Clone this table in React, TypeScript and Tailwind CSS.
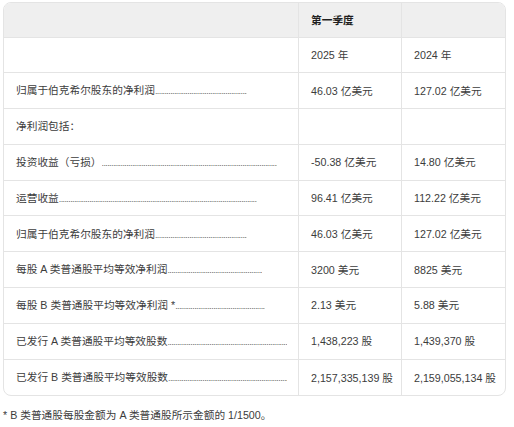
import React from 'react'

const rows: { label: string; end: number; a: string; b: string }[] = [
  { label: '', end: 0, a: '2025 年', b: '2024 年' },
  { label: '归属于伯克希尔股东的净利润', end: 247, a: '46.03 亿美元', b: '127.02 亿美元' },
  { label: '净利润包括：', end: 0, a: '', b: '' },
  { label: '投资收益（亏损）', end: 277, a: '-50.38 亿美元', b: '14.80 亿美元' },
  { label: '运营收益', end: 257, a: '96.41 亿美元', b: '112.22 亿美元' },
  { label: '归属于伯克希尔股东的净利润', end: 247, a: '46.03 亿美元', b: '127.02 亿美元' },
  { label: '每股 A 类普通股平均等效净利润', end: 262, a: '3200 美元', b: '8825 美元' },
  { label: '每股 B 类普通股平均等效净利润 *', end: 265, a: '2.13 美元', b: '5.88 美元' },
  { label: '已发行 A 类普通股平均等效股数', end: 287, a: '1,438,223 股', b: '1,439,370 股' },
  { label: '已发行 B 类普通股平均等效股数', end: 287, a: '2,157,335,139 股', b: '2,159,055,134 股' },
]

const font = { fontFamily: '"Liberation Sans", "Noto Sans CJK SC", sans-serif' }

function Cell({ children, last }: { children?: React.ReactNode; last?: boolean }) {
  return (
    <div className={`flex items-center px-[12px] whitespace-nowrap ${last ? '' : 'border-r border-[#e4e4e4]'}`}>
      {children}
    </div>
  )
}

export default function App() {
  return (
    <div className="bg-white w-[514px] h-[427px] pl-[3px] pt-[2px] text-[10.7px] text-[#3c3c3c]" style={font}>
      <div className="w-[503px] border border-[#e4e4e4] rounded-[8px] overflow-hidden">
        <div className="grid grid-cols-[295px_103px_103px] h-[34.5px] bg-[#efefef] border-b border-[#e4e4e4]">
          <Cell />
          <Cell>
            <span className="font-bold text-[#1f1f1f]">第一季度</span>
          </Cell>
          <Cell last />
        </div>
        {rows.map((r, i) => (
          <div
            key={i}
            className={`grid grid-cols-[295px_103px_103px] h-[35.8px] ${i < rows.length - 1 ? 'border-b border-[#e4e4e4]' : ''}`}
          >
            <Cell>
              {r.end > 0 ? (
                <span className="flex items-baseline" style={{ width: r.end - 16 }}>
                  <span>{r.label}</span>
                  <span className="flex-1 min-w-0 overflow-hidden text-[9px] tracking-[-0.6px] text-[#6a6a6a]">
                    {'.'.repeat(200)}
                  </span>
                </span>
              ) : (
                <span>{r.label}</span>
              )}
            </Cell>
            <Cell>{r.a}</Cell>
            <Cell last>{r.b}</Cell>
          </div>
        ))}
      </div>
      <p className="mt-[11px] whitespace-nowrap">* B 类普通股每股金额为 A 类普通股所示金额的 1/1500。</p>
    </div>
  )
}
